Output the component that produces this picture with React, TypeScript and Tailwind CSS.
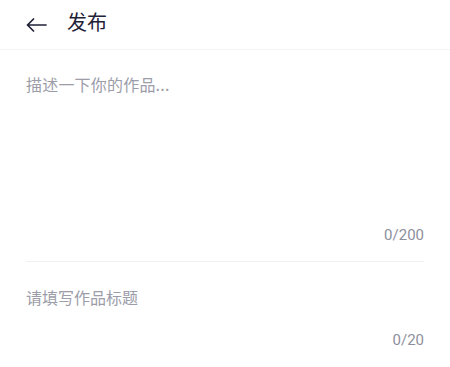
import React from "react";

export default function App() {
  const font = { fontFamily: '"Noto Sans CJK SC", "Noto Sans", sans-serif' };
  return (
    <div className="w-[450px] h-[367px] bg-white overflow-hidden" style={font}>
      <div className="h-[50px] flex items-center border-b border-[#f4f4f6]">
        <div className="ml-[25px] w-[22px] h-[22px] flex items-center justify-center">
          <svg width="21" height="14" viewBox="0 0 21 14" fill="none">
            <path d="M20 7H1.5M7.5 1L1.5 7L7.5 13" stroke="#1f2138" strokeWidth="1.7" strokeLinecap="round" strokeLinejoin="round" />
          </svg>
        </div>
        <div className="ml-[20px] text-[20px] leading-[28px] font-normal text-[#1f2138] -mt-[6px]">发布</div>
      </div>
      <div className="px-[26px]">
        <div className="pt-[22px] h-[175px] text-[16px] leading-[24px] tracking-[0.2px] text-[#9c9da9]">描述一下你的作品...</div>
        <div className="text-right text-[15px] leading-[20px] text-[#8e8f9c]" style={{ fontFamily: 'Roboto, "Noto Sans", sans-serif' }}>0/200</div>
        <div className="mt-[16px] border-b border-[#f0f0f2]"></div>
        <div className="pt-[23px] h-[68px] text-[16px] leading-[24px] text-[#9c9da9]">请填写作品标题</div>
        <div className="text-right text-[15px] leading-[20px] text-[#8e8f9c]" style={{ fontFamily: 'Roboto, "Noto Sans", sans-serif' }}>0/20</div>
      </div>
    </div>
  );
}
